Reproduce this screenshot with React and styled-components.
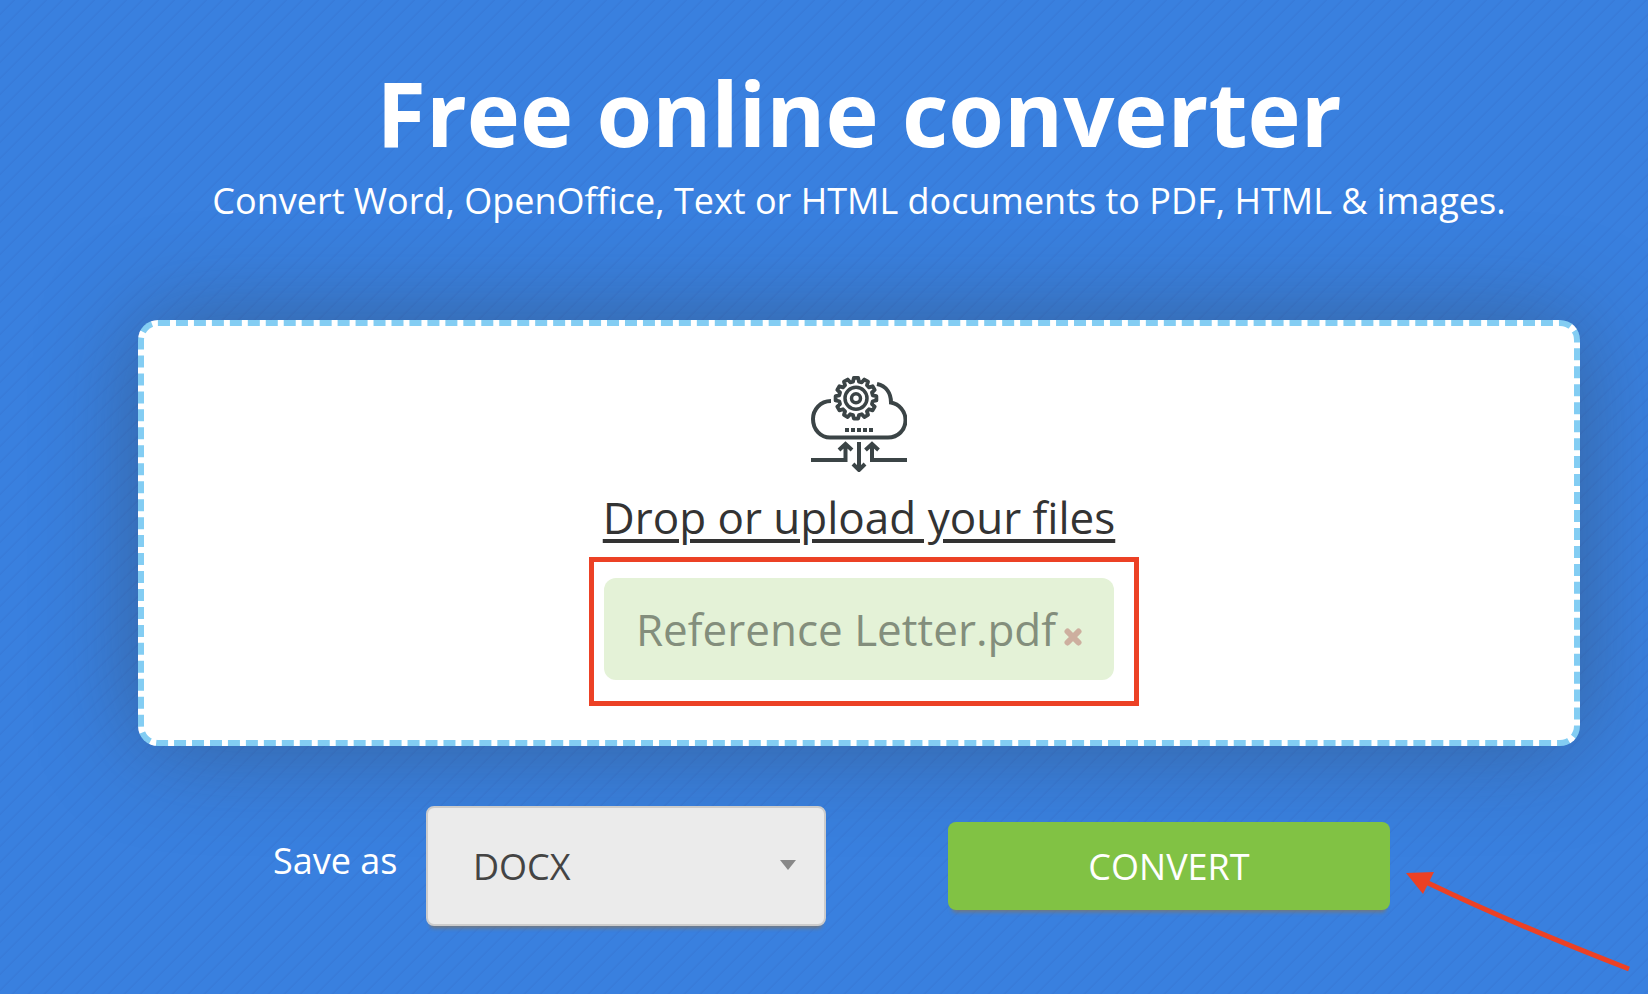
import React, { useState } from 'react';
import styled, { createGlobalStyle } from 'styled-components';

const formats = ['DOCX', 'PDF', 'HTML', 'TXT', 'JPG']

export default function App(){
    const [files, setFiles] = useState(['Reference Letter.pdf'])
    const [format, setFormat] = useState('DOCX')

    function remove(name){
        setFiles(files.filter(file => file !== name))
    }

    function convert(event){
        event.preventDefault()
    }

    return(
        <>
            <GlobalStyle />
            <Page>
                <Header>
                    <h1>Free online converter</h1>
                    <p>Convert Word, OpenOffice, Text or HTML documents to PDF, HTML &amp; images.</p>
                </Header>
                <DropZone>
                    <CloudIcon />
                    <UploadLink href="#upload">Drop or upload your files</UploadLink>
                    <Highlight>
                        {files.map(file =>
                            <FileTag key={file}>
                                <span>{file}</span>
                                <RemoveButton type="button" aria-label={`Remove ${file}`} onClick={()=>remove(file)}>
                                    <CrossIcon />
                                </RemoveButton>
                            </FileTag>)
                        }
                    </Highlight>
                </DropZone>
                <Actions onSubmit={convert}>
                    <Label htmlFor="format">Save as</Label>
                    <SelectBox>
                        <Select id="format" value={format} onChange={(e)=>setFormat(e.target.value)}>
                            {formats.map(item => <option key={item}>{item}</option>)}
                        </Select>
                    </SelectBox>
                    <ConvertButton type="submit">CONVERT</ConvertButton>
                    <PointerArrow />
                </Actions>
            </Page>
        </>
    )
}

// outline of a 12 tooth gear, four points for each tooth
function gearPath(cx, cy){
    const corners = [[-10, 17], [-6, 20.5], [6, 20.5], [10, 17]]
    const points = []
    for(let tooth = 0; tooth < 12; tooth++){
        corners.forEach(([offset, radius]) => {
            const angle = (tooth * 30 + offset) * Math.PI / 180
            points.push(`${(cx + radius * Math.sin(angle)).toFixed(2)} ${(cy - radius * Math.cos(angle)).toFixed(2)}`)
        })
    }
    return `M${points.join('L')}Z`
}

function CloudIcon(){
    return(
        <svg width="96" height="96" viewBox="0 0 96 96" fill="none" stroke="#3b4446" strokeWidth="4" aria-hidden="true">
            <path d="M20 25C9 25 2 34 2 43C2 54 10 61.500 19 61.500H77C87 61.500 94.500 54 94.500 44C94.500 35 88 28 80 26.500C80 17 75 10 66 8" />
            <path d={gearPath(45, 22.3)} strokeWidth="3.800" strokeLinejoin="round" />
            <circle cx="45" cy="22.300" r="11" strokeWidth="3.500" />
            <circle cx="45" cy="22.300" r="4.500" strokeWidth="3.500" />
            <path d="M34 54H62" strokeDasharray="4 2" />
            <path d="M0 84H34.500V69M28 74L34.500 68L41 74M96 84H61V69M54.500 74L61 68L67.500 74M48 66V94M42 88L48 94L54 88" />
        </svg>
    )
}

function CrossIcon(){
    return(
        <svg width="18" height="18" viewBox="0 0 18 18" stroke="#cdaf9f" strokeWidth="6" strokeLinecap="round" aria-hidden="true">
            <path d="M3.500 3.500L14.500 14.500M14.500 3.500L3.500 14.500" />
        </svg>
    )
}

function PointerArrow(){
    return(
        <Arrow width="224" height="100" viewBox="0 0 224 100" fill="none" aria-hidden="true">
            <path d="M22 11Q112 54 223 97" stroke="#ec4125" strokeWidth="5" />
            <path d="M0 1L28 0L17 22Z" fill="#ec4125" />
        </Arrow>
    )
}

const GlobalStyle = createGlobalStyle`
    *{
        box-sizing: border-box;
    }
    body{
        margin: 0;
    }
    h1, p{
        margin: 0;
    }
    body, button, select{
        font-family: 'Open Sans', sans-serif;
    }
`

const Page = styled.main`
    min-height: 100vh;
    padding: 56px 68px 60px 138px;
    background-color: #3980df;
    background-image: linear-gradient(135deg, transparent 38%, #387bd9 45%, #387bd9 47%, transparent 50%, transparent 88%, #387bd9 95%, #387bd9 97%, transparent 100%);
    background-size: 16px 16px;
`

const Header = styled.header`
    text-align: center;
    color: #fff;
    h1{
        font-size: 90px;
        font-weight: 700;
        line-height: 112px;
    }
    p{
        padding-top: 5px;
        font-size: 36px;
        line-height: 56px;
    }
`

const DropZone = styled.section`
    display: flex;
    flex-direction: column;
    align-items: center;
    margin-top: 91px;
    padding: 50px 20px 34px;
    border: 6px dashed #83cdf3;
    border-radius: 20px;
    background-color: #fff;
    box-shadow: 0 0 100px rgba(50, 50, 50, 0.4);
`

const UploadLink = styled.a`
    margin-top: 15px;
    margin-bottom: 10px;
    font-size: 44px;
    line-height: 60px;
    text-decoration-thickness: 4px;
    text-underline-offset: 5px;
    color: #333;
`

const Highlight = styled.div`
    display: flex;
    margin-left: 10px;
    padding: 16px 20px 21px 10px;
    border: 5px solid #ec4125;
`

const FileTag = styled.div`
    display: flex;
    align-items: center;
    gap: 8px;
    height: 102px;
    padding: 0 32px;
    border-radius: 12px;
    background-color: #e4f2d7;
    font-size: 44px;
    color: #838e7c;
`

const RemoveButton = styled.button`
    display: flex;
    margin-top: 16px;
    padding: 0;
    border: 0;
    background: none;
    cursor: pointer;
`

const Actions = styled.form`
    display: flex;
    align-items: center;
    margin-top: 60px;
    padding-left: 135px;
    font-size: 36px;
`

const Label = styled.label`
    width: 153px;
    padding-bottom: 12px;
    color: #fff;
`

const SelectBox = styled.div`
    display: grid;
    width: 400px;
    align-items: center;
    &::after{
        content: '';
        grid-area: 1 / 1;
        justify-self: end;
        margin: 0 30px 2px 0;
        border: 8px solid transparent;
        border-top: 10px solid #888;
        border-bottom: 0;
        pointer-events: none;
    }
`

const Select = styled.select`
    grid-area: 1 / 1;
    width: 100%;
    height: 120px;
    padding: 0 45px;
    appearance: none;
    border: 2px solid #ccc;
    border-radius: 8px;
    background-color: #ebebeb;
    box-shadow: 0 6px 4px -4px #777;
    font-size: 36px;
    color: #444;
`

const ConvertButton = styled.button`
    width: 442px;
    height: 88px;
    margin-left: 122px;
    padding: 0;
    border: 0;
    border-radius: 8px;
    background-color: #81c244;
    box-shadow: 0 6px 4px -4px #777;
    font-size: 36px;
    color: #fff;
    cursor: pointer;
`

const Arrow = styled.svg`
    flex-shrink: 0;
    align-self: flex-start;
    margin: 66px -50px -46px 16px;
`
